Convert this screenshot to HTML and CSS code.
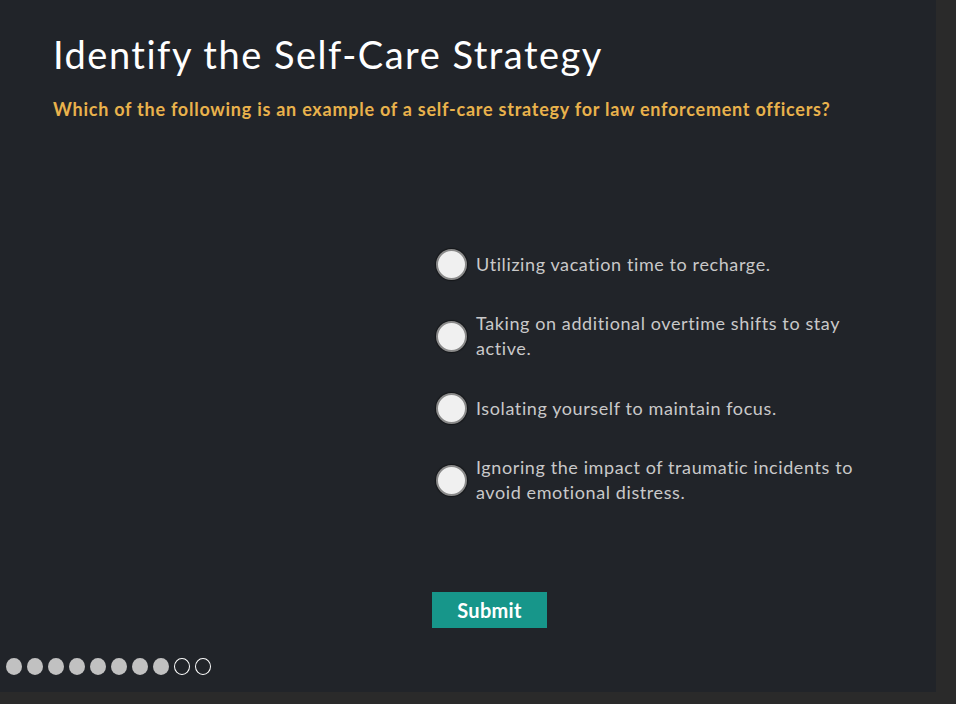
FILE: index.html
```html
<!DOCTYPE html>
<html>
<head>
<meta charset="utf-8">
<link rel="stylesheet" href="styles.css">
</head>
<body>
<div class="page">
  <main class="panel">
    <header class="head">
      <h1 class="title">Identify the Self-Care Strategy</h1>
      <p class="question">Which of the following is an example of a self-care strategy for law enforcement officers?</p>
    </header>
    <section class="quiz">
      <ul class="options">
        <li class="option"><span class="radio"></span><span class="label">Utilizing vacation time to recharge.</span></li>
        <li class="option"><span class="radio"></span><span class="label">Taking on additional overtime shifts to stay active.</span></li>
        <li class="option"><span class="radio"></span><span class="label">Isolating yourself to maintain focus.</span></li>
        <li class="option"><span class="radio"></span><span class="label">Ignoring the impact of traumatic incidents to avoid emotional distress.</span></li>
      </ul>
      <button class="submit">Submit</button>
    </section>
    <nav class="dots">
      <span class="dot"></span><span class="dot"></span><span class="dot"></span><span class="dot"></span><span class="dot"></span><span class="dot"></span><span class="dot"></span><span class="dot"></span><span class="dot empty"></span><span class="dot empty"></span>
    </nav>
  </main>
</div>
</body>
</html>
```

FILE: styles.css
```css
html, body {
  margin: 0;
  padding: 0;
  background: #2a2a2a;
  height: 100%;
}
.page {
  width: 956px;
  height: 704px;
  overflow: hidden;
}
.panel {
  width: 936px;
  height: 692px;
  background: #212429;
  display: flex;
  flex-direction: column;
  box-sizing: border-box;
  font-family: Lato, "Open Sans", sans-serif;
}
.head {
  padding: 30px 0 0 53px;
}
.title {
  margin: 0;
  font-size: 38px;
  font-weight: 400;
  letter-spacing: 1.5px;
  color: #ffffff;
  line-height: 48px;
}
.question {
  margin: 20px 0 0 0;
  font-size: 18px;
  font-weight: 700;
  letter-spacing: 0.75px;
  color: #e9b24c;
  line-height: 22px;
}
.quiz {
  margin-left: 432px;
  padding-top: 119px;
  display: flex;
  flex-direction: column;
  align-items: flex-start;
}
.options {
  list-style: none;
  margin: 0;
  padding: 0;
  display: flex;
  flex-direction: column;
  gap: 22px;
}
.option {
  display: flex;
  align-items: center;
  gap: 9px;
  padding-left: 4px;
  min-height: 50px;
}
.radio {
  flex: none;
  width: 27px;
  height: 27px;
  border-radius: 50%;
  background: #f0f0f0;
  border: 2px solid #8a8a8a;
  box-shadow: 0 0 1px 1px rgba(0,0,0,0.4);
}
.label {
  width: 400px;
  font-size: 18px;
  letter-spacing: 0.6px;
  line-height: 25px;
  color: #c9c9c9;
}
.submit {
  margin-top: 87px;
  width: 115px;
  height: 36px;
  border: none;
  background: #17968a;
  color: #ffffff;
  font-family: Lato, sans-serif;
  font-size: 20px;
  font-weight: 700;
  letter-spacing: 0.3px;
  padding: 0;
}
.dots {
  margin-top: 30px;
  padding-left: 6px;
  display: flex;
  gap: 5px;
}
.dot {
  width: 16px;
  height: 17px;
  border-radius: 50%;
  background: #c1c1c1;
  box-sizing: border-box;
}
.dot.empty {
  background: transparent;
  border: 1.5px solid #ffffff;
}
```
